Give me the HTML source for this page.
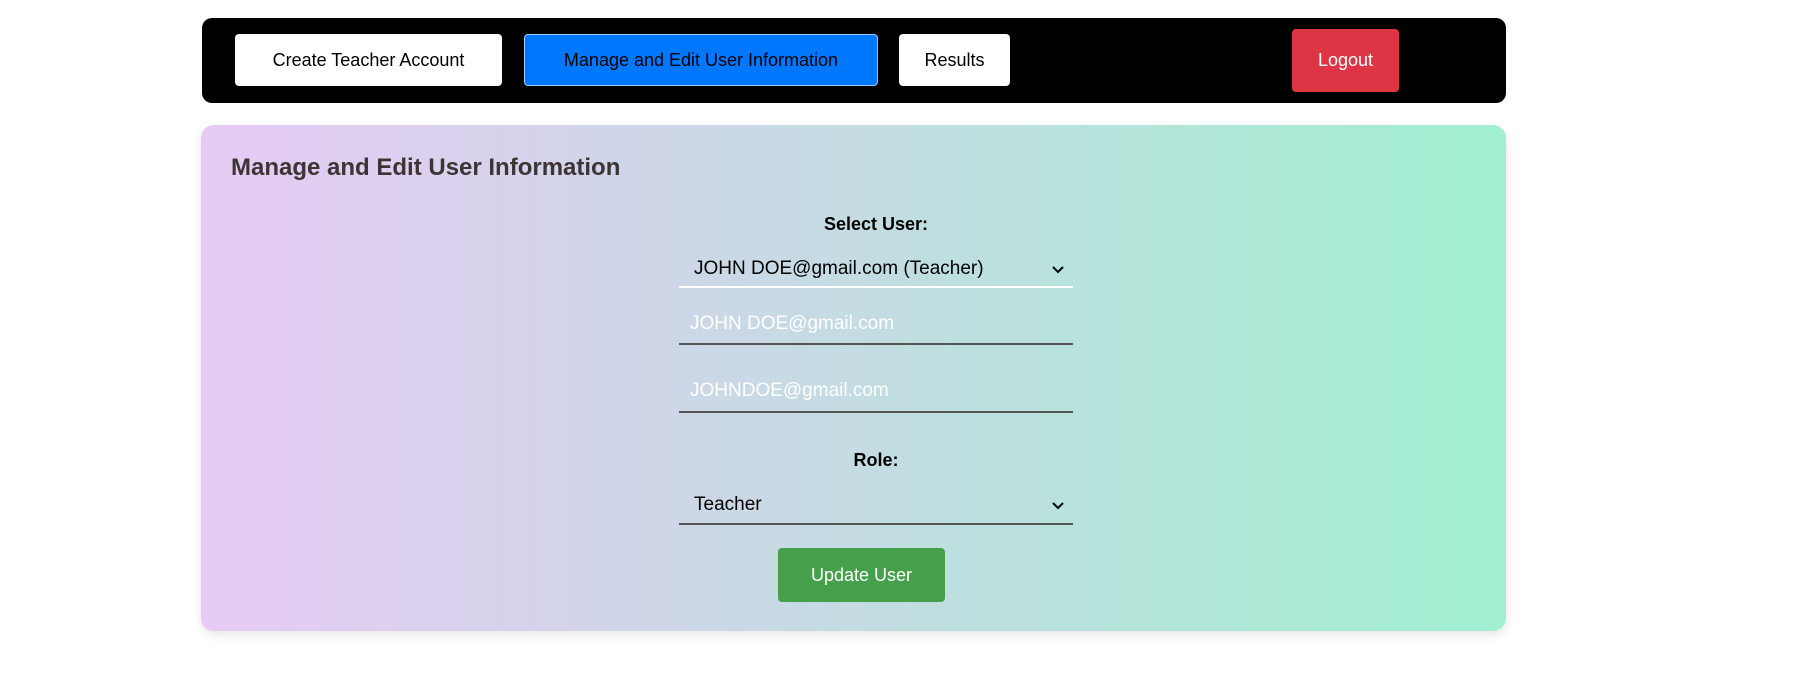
<!DOCTYPE html>
<html><head><style>
*{box-sizing:border-box;margin:0;padding:0}
body{width:1793px;height:683px;background:#fff;font-family:"Liberation Sans",sans-serif;position:relative;overflow:hidden}
.nav{position:absolute;left:202px;top:18px;width:1304px;height:85px;background:#000;border-radius:10px}
.b{position:absolute;height:52px;border-radius:4px;background:#fff;color:#000;font-size:18px;display:flex;align-items:center;justify-content:center}
.card{position:absolute;left:201px;top:125px;width:1305px;height:506px;border-radius:13px;background:linear-gradient(90deg,#e7cbf5,#cbd8e6 40%,#a0efcf);box-shadow:0 4px 10px rgba(0,0,0,.1)}
h2{position:absolute;left:30px;top:29px;font-size:24px;color:#3d3535;font-weight:bold}
.lbl{position:absolute;font-weight:bold;font-size:18px;width:394px;left:478px;text-align:center}
.f{position:absolute;left:478px;width:394px;font-size:19px}
.chev{position:absolute;right:8px;top:4px}
</style></head><body>
<div class="nav">
<div class="b" style="left:33px;top:16px;width:267px">Create Teacher Account</div>
<div class="b" style="left:322px;top:16px;width:354px;background:#0077ff;border:1px solid #9cf">Manage and Edit User Information</div>
<div class="b" style="left:697px;top:16px;width:111px">Results</div>
<div class="b" style="left:1090px;top:11px;width:107px;height:63px;background:#de3545;color:#fff">Logout</div>
</div>
<div class="card">
<h2>Manage and Edit User Information</h2>
<div class="lbl" style="top:89px">Select User:</div>
<div class="f" style="top:133px;height:30px;border-bottom:2px solid #fff;padding-left:15px;color:#000">JOHN DOE@gmail.com (Teacher)<svg class="chev" width="14" height="14" viewBox="0 0 14 14"><path d="M2 5l5 5 5-5" fill="none" stroke="#000" stroke-width="2"/></svg></div>
<div class="f" style="top:188px;height:32px;border-bottom:2px solid #555;padding-left:11px;color:#fff">JOHN DOE@gmail.com</div>
<div class="f" style="top:255px;height:33px;border-bottom:2px solid #555;padding-left:11px;color:#fff">JOHNDOE@gmail.com</div>
<div class="lbl" style="top:325px">Role:</div>
<div class="f" style="top:369px;height:31px;border-bottom:2px solid #555;padding-left:15px;color:#000">Teacher<svg class="chev" width="14" height="14" viewBox="0 0 14 14"><path d="M2 5l5 5 5-5" fill="none" stroke="#000" stroke-width="2"/></svg></div>
<div class="b" style="left:577px;top:423px;width:167px;height:54px;background:#46a04b;color:#fff">Update User</div>
</div>
</body></html>
